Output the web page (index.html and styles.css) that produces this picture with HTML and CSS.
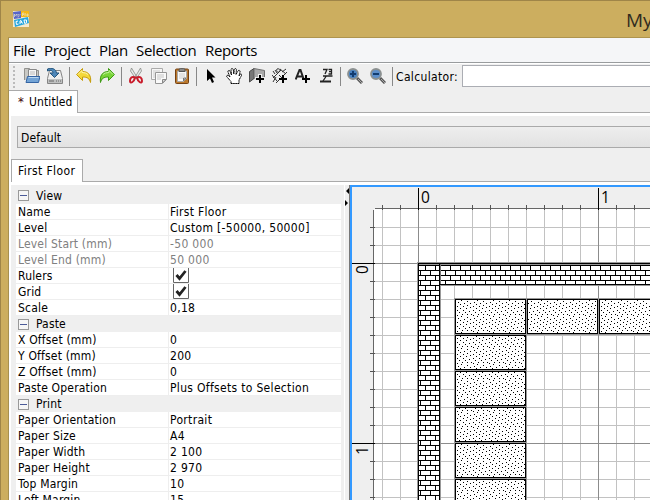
FILE: index.html
```html
<!DOCTYPE html>
<html lang="en">
<head>
<meta charset="utf-8">
<title>MyProCAD</title>
<link rel="stylesheet" href="styles.css">
</head>
<body>
<div class="window">
  <header class="titlebar">
    <svg class="logo" width="16" height="16" viewBox="0 0 16 16">
      <path fill="#f4ead0" d="M0 0h16v16H0z"/><path fill="#5865c9" d="M0 1l8-1v7l-7 1z"/><path fill="#f6b818" d="M8 0h8v6H8z"/><path fill="#29a8e0" d="M1 9l14-3 1 6-14 4z"/>
      <path d="M1.500 6V3l1 1.500L4 3v2.500M5 3l1 1.500L7.500 3M6 5l-1 1.500M9.500 5V2h1.500v1.500H9.500M12 5V3l1-.5M14 3h1v2h-1z" fill="none" stroke="#e7e5c6" stroke-width=".7"/>
      <path d="M5 10l-2 .5.5 3 2-.5M7 13V10l1-.5 1.500 3M7.500 11.500l1.500-.5M11 9l.7 3.500 1.800-.7V9z" fill="none" stroke="#fff"/>
    </svg>
    <span class="caption">My</span>
  </header>
  <div class="client">
    <nav class="menubar"><span class="m1">File</span><span class="m2">Project</span><span class="m3">Plan</span><span class="m4">Selection</span><span class="m5">Reports</span></nav>
    <div class="toolbar">
      <i class="grip"></i>
      <div class="group">
        <svg viewBox="0 0 16 16"><path d="M.5 12V.5h5l1 2h8V12" fill="#c9c9c5" stroke="#92928f"/><path d="M4.500 1.500h8V11h-8z" fill="#f5f5f5" stroke="#888"/><path d="M6 4h5M6 6h5" stroke="#bbb"/><path d="M3.500 8.500h12.500L14.500 14.500H2z" fill="#73a4d6" stroke="#3565a4"/><path d="M4.500 9.500h10" stroke="#b9d6ef"/></svg>
        <svg viewBox="0 0 16 16"><path d="M2.500 2.500h11l2 8v5H.5v-5z" fill="#eee" stroke="#858585"/><path d="M1 11h14v4H1z" fill="#bfc1c1"/><path d="M2 13h5M9 13h1M11 13h1M13 13h1" stroke="#666"/><path d="M.5 1C5-.8 9 1 9.500 5H12l-4.500 4.500L3 5h3C6 3 4 1.500.5 3z" fill="#4e87b9" stroke="#24557d"/></svg>
      </div><i class="sep"></i>
      <div class="group">
        <svg viewBox="0 0 16 16"><path d="M6.500.5v3c6 0 9 4 8 11-1-4-3-5.500-8-5.500v3.500L.6 6.600z" fill="#f4d83a" stroke="#c59c0c"/><path d="M2 6.500l4-4v2q4 0 6 2" stroke="#fff6aa" fill="none"/></svg>
        <svg viewBox="0 0 16 16"><path d="M9.500.5v3c-6 0-9 4-8 11 1-4 3-5.500 8-5.500v3.500l5.900-5.900z" fill="#79d438" stroke="#3c9a13"/><path d="M14 6.500l-4-4v2q-4 0-6 2" stroke="#c4f39d" fill="none"/></svg>
      </div><i class="sep"></i>
      <div class="group">
        <svg viewBox="0 0 16 16"><path d="M3.500 0l6 10-1.500 1L2.500 3zM12.500 0l-6 10 1.500 1 5.500-8z" fill="#e6e8e7" stroke="#888b88" stroke-width=".8"/><path d="M7 9.500c-3-1.500-5 .5-5 3.500 0 3 4 1.500 5-3.500zm2 0c3-1.500 5 .5 5 3.500 0 3-4 1.500-5-3.500z" fill="none" stroke="#c91c2b" stroke-width="2"/></svg>
        <svg viewBox="0 0 16 16"><path d="M.5.500h11v11H.5z" fill="#f6f6f6" stroke="#aaa"/><path d="M2 3h7M2 5h2M2 7h2M2 9h2" stroke="#ccc"/><path d="M4.500 4.500h11v7l-4 4h-7z" fill="#fafafa" stroke="#969696"/><path d="M6 7h7M6 9h7M6 11h4" stroke="#c5c5c5"/><path d="M11.500 15v-3.500H15z" fill="#ddd" stroke="#888"/></svg>
        <svg viewBox="0 0 16 16"><rect x="1.500" y="1" width="13" height="14.500" rx="1" fill="#bb792d" stroke="#744113"/><path d="M3.500 3h9v7.500l-3 3h-6z" fill="#fafafa" stroke="#aaa"/><path d="M5 1.500L6.500.2h3L11 1.500v2H5z" fill="#888" stroke="#555"/><path d="M5 6h6M5 8h6M5 10h4" stroke="#ccc"/><path d="M9.500 13v-3H12z" fill="#ddd" stroke="#777"/></svg>
      </div><i class="sep"></i>
      <div class="group">
        <svg viewBox="0 0 16 16"><path d="M4 1v12l3-2.500 2 4.500 2-1-2-4.500h3.500z" fill="#000"/></svg>
        <svg viewBox="0 0 16 16"><path d="M5 15.500v-2L1 9C-.3 7.500 1.700 6.600 3 8l1 1-2-5c-.4-1.700 1.500-2.200 2.200-.5L5.500 7 5 2c0-2 2-2 2.300-.2L7.800 6l.5-4.500c.3-1.500 2.200-1.200 2.100.3L10 6.500 12 3c.8-1.400 2.500-.5 2 1l-1 4 1-1.500c1-1.200 2-.3 1.500 1L13 12v3.500z" fill="#fff" stroke="#000" stroke-dasharray="1.500 .35"/></svg>
        <svg viewBox="0 0 16 16"><path d="M.5 3.500L5 .5v10L.5 14z" fill="#777" stroke="#484848"/><path d="M5 .5l10.500 2v10L5 10z" fill="#aaa" stroke="#717171"/><path d="M11 6v10M6 11h10" stroke="#eee" stroke-width="4"/><path d="M11 7v8M7 11h8" stroke="#000" stroke-width="2"/></svg>
        <svg viewBox="0 0 16 16"><path d="M1 10l8-8M4 15l11-11M0 7l5 6M8 1l6 5M1 3l2 3M3 2l2 3M5 1c3-1 4 2 2 3S4 2 5 1zM10 4l4-3M1 14l3-5M7 7l3 3" stroke="#333" fill="none"/><path d="M11 7v8M7 11h8" stroke="#000" stroke-width="2"/></svg>
        <svg viewBox="0 0 16 16"><path d="M.7 11.500L4.500 2h1l3.300 9.500M2 8.500h5" fill="none" stroke="#222" stroke-width="2"/><path d="M11 7v8M7 11h8" stroke="#000" stroke-width="2"/></svg>
        <svg viewBox="0 0 16 16"><path d="M5 1.500h4L7 6M10.500 1.500h3V6h-3M11 3.700h2.500M5 8h9.500M8 8.500L5 13" fill="none" stroke="#222" stroke-width="1.300"/><path d="M2 13.500h11" stroke="#222" stroke-width="2"/></svg>
      </div><i class="sep"></i>
      <div class="group">
        <svg viewBox="0 0 16 16"><path d="M10 10l5 5" stroke="#555" stroke-width="3"/><path d="M11 11l4 4" stroke="#aaa"/><circle cx="6" cy="6" r="5" fill="#4a83c1" stroke="#8b9090" stroke-width="1.800"/><path d="M6 3v6M3 6h6" stroke="#123c70" stroke-width="2"/></svg>
        <svg viewBox="0 0 16 16"><path d="M10 10l5 5" stroke="#555" stroke-width="3"/><path d="M11 11l4 4" stroke="#aaa"/><circle cx="6" cy="6" r="5" fill="#5d8fcb" stroke="#8b9090" stroke-width="1.800"/><path d="M3 6h6" stroke="#123c70" stroke-width="2"/></svg>
      </div><i class="sep"></i>
      <label class="calc">Calculator:</label><div class="field"></div>
    </div>
    <div class="tabs"><div class="tab doc"><b class="star">*</b><span>Untitled</span></div></div>
    <div class="page">
      <div class="combo"><span>Default</span></div>
      <div class="tabs floors"><div class="tab floor"><span>First Floor</span></div></div>
      <div class="split">
        <div class="props">
          <div class="head first"><i class="minus"></i>View</div>
          <div class="row"><span>Name</span><span>First Floor</span></div>
          <div class="row"><span>Level</span><span>Custom [-50000, 50000]</span></div>
          <div class="row off"><span>Level Start (mm)</span><span>-50 000</span></div>
          <div class="row off"><span>Level End (mm)</span><span>50 000</span></div>
          <div class="row"><span>Rulers</span><span><svg class="check" viewBox="0 0 16 15"><path d="M.5 0v14.500h15V0" fill="#fff" stroke="#666"/><path d="M3.500 7l3 3.500 6-7.500" fill="none" stroke="#222" stroke-width="2.800"/></svg></span></div>
          <div class="row"><span>Grid</span><span><svg class="check" viewBox="0 0 16 15"><path d="M.5 0v14.500h15V0" fill="#fff" stroke="#666"/><path d="M3.500 7l3 3.500 6-7.500" fill="none" stroke="#222" stroke-width="2.800"/></svg></span></div>
          <div class="row"><span>Scale</span><span>0,18</span></div>
          <div class="head"><i class="minus"></i>Paste</div>
          <div class="row"><span>X Offset (mm)</span><span>0</span></div>
          <div class="row"><span>Y Offset (mm)</span><span>200</span></div>
          <div class="row"><span>Z Offset (mm)</span><span>0</span></div>
          <div class="row"><span>Paste Operation</span><span>Plus Offsets to Selection</span></div>
          <div class="head"><i class="minus"></i>Print</div>
          <div class="row"><span>Paper Orientation</span><span>Portrait</span></div>
          <div class="row"><span>Paper Size</span><span>A4</span></div>
          <div class="row"><span>Paper Width</span><span>2 100</span></div>
          <div class="row"><span>Paper Height</span><span>2 970</span></div>
          <div class="row"><span>Top Margin</span><span>10</span></div>
          <div class="row"><span>Left Margin</span><span>15</span></div>
        </div>
        <div class="divider"><svg width="4" height="22" viewBox="0 0 4 22"><path d="M4 2v6L1 5zM0 14v6l3-3z"/></svg></div>
        <!-- Plan view: drawing units are window pixels -->
        <svg class="plan" width="301" height="315" viewBox="349 185 301 315" shape-rendering="crispEdges">
          <defs>
            <pattern id="grid" x="382" y="209" width="18" height="18" patternUnits="userSpaceOnUse"><path d="M0 0h1v18H0z" fill="#c2c2c2"/><path d="M0 0h18v1H0z" fill="#c2c2c2"/></pattern>
            <pattern id="ticksX" x="382" y="0" width="18" height="500" patternUnits="userSpaceOnUse"><path d="M0 205h1v5H0z" fill="#555"/></pattern>
            <pattern id="ticksY" x="0" y="209" width="500" height="18" patternUnits="userSpaceOnUse"><path d="M370 0h5v1h-5z" fill="#555"/></pattern>
            <pattern id="brickA" x="420" y="265" width="10" height="10" patternUnits="userSpaceOnUse"><path d="M0 0h10v1H0zM5 1h1v4H5zM0 5h10v1H0zM0 6h1v4H0z"/></pattern>
            <pattern id="brickB" x="440" y="265" width="10" height="10" patternUnits="userSpaceOnUse"><path d="M0 0h10v1H0zM0 1h1v4H0zM0 5h10v1H0zM5 6h1v4H5z"/></pattern>
            <pattern id="dots" x="456" y="300" width="16" height="16" patternUnits="userSpaceOnUse"><path d="M5 0h1v1H5zM11 1h1v1h-1zM2 2h1v1H2zM8 3h1v1H8zM14 3h1v1h-1zM4 4h1v1H4zM11 5h1v1h-1zM1 6h1v1H1zM7 6h1v1H7zM14 7h1v1h-1zM4 8h1v1H4zM10 8h1v1h-1zM1 10h1v1H1zM7 10h1v1H7zM13 11h1v1h-1zM3 12h1v1H3zM9 12h1v1H9zM6 14h1v1H6zM15 14h1v1h-1zM1 15h1v1H1zM11 14h1v1h-1z"/></pattern>
            <path id="cells" d="M455.500 299.500h70v34h-70zM527.500 299.500h70v34h-70zM599.500 299.500h70v34h-70zM455.500 335.500h70v34h-70zM455.500 371.500h70v34h-70zM455.500 407.500h70v34h-70zM455.500 443.500h70v34h-70zM455.500 479.500h70v34h-70z"/>
          </defs>
          <path fill="#efefef" d="M349 185h301v315H349z"/>
          <path fill="#fff" d="M374 209h276v291H374z"/>
          <path fill="url(#grid)" d="M374 210h276v290H374z"/>
          <path fill="#8c8c8c" d="M418 209h1v291h-1zM598 209h1v291h-1zM374 263h276v1H374zM374 443h276v1H374z"/>
          <path fill="#666" d="M375 208h275v1H375zM373 210h1v290h-1z"/>
          <path fill="url(#ticksX)" d="M376 205h274v5H376z"/><path fill="url(#ticksY)" d="M370 220h5v280h-5z"/>
          <path d="M418 188h1v22h-1zM598 188h1v22h-1zM352 263h23v1h-23zM352 443h23v1h-23z"/>
          <g class="wall">
            <path class="halo" d="M418.500 513.500v-250h251v21h-230v230z"/>
            <rect x="418.500" y="263.500" width="21" height="250" fill="#fff"/><rect x="418.500" y="263.500" width="21" height="250" fill="url(#brickA)"/>
            <rect x="439.500" y="263.500" width="230" height="21" fill="#fff"/><rect x="439.500" y="263.500" width="230" height="21" fill="url(#brickB)"/>
            <path fill="#999" d="M419 264h20v1h-20zM440 264h210v1H440z"/>
            <path fill="#777" d="M440 264h1v20h-1z"/>
          </g>
          <use href="#cells" class="halo"/><use href="#cells" fill="#fff"/><use href="#cells" fill="url(#dots)" stroke="#000"/>
          <path fill="#777" d="M349 185h1v315h-1z"/>
          <path fill="#3399ff" d="M350 185h300v2H352v313h-2z"/>
          <g class="nums"><text x="421" y="203">0</text><text x="601" y="203">1</text><text transform="translate(368 274) rotate(-90)">0</text><text transform="translate(368 455) rotate(-90)">1</text></g>
        </svg>
      </div>
    </div>
  </div>
</div>
</body>
</html>
```
FILE: styles.css
```css
* { box-sizing: border-box; }
body { margin: 0; width: 650px; height: 500px; overflow: hidden; font: 12px/16px "DejaVu Sans Condensed", "DejaVu Sans", sans-serif; font-stretch: condensed; color: #000; }
.window { height: 500px; background: #ccae5f; border-top: 1px solid #9f8548; border-left: 1px solid #9f8548; display: flex; flex-direction: column; }
.titlebar { height: 37px; flex: none; display: flex; border-bottom: 1px solid #ae944e; margin-left: 7px; padding: 10px 0 0 5px; overflow: hidden; }
.logo { flex: none; }
.caption { font: 19px/20px "Open Sans", sans-serif; color: #302b1e; margin: -1px 0 0 597px; }
.client { margin-left: 7px; border-left: 1px solid #a6904f; flex: 1; min-height: 0; background: #efefef; display: flex; flex-direction: column; }
.menubar { height: 25px; flex: none; background: #f5f6f8; border-bottom: 1px solid #999c9e; font: 15px/25px "Open Sans", sans-serif; padding-left: 4px; display: flex; white-space: nowrap; letter-spacing: -.35px; }
.menubar span { flex: none; }
.m1 { width: 31px; }
.m2 { width: 55px; }
.m3 { width: 37px; }
.m4 { width: 69px; }
.toolbar { height: 27px; flex: none; display: flex; align-items: flex-start; border-top: 1px solid #fff; padding: 1px 0 0 4px; }
.grip { width: 2px; height: 22px; margin: 1px 9px 0 0; background: repeating-linear-gradient(#bbb 0 2px, transparent 2px 4px); }
.group { display: flex; gap: 7px; margin-top: 3px; }
.group svg { width: 16px; height: 16px; }
.sep { width: 1px; height: 19px; background: #888; margin: 2px 6px 0; }
.calc { margin: 4px 0 0 -3px; width: 66px; white-space: nowrap; letter-spacing: .35px; }
.field { flex: 1; height: 22px; border: 1px solid #abadb3; border-right: 0; background: #fff; }
.tabs { display: flex; height: 26px; border-bottom: 3px solid #fff; box-shadow: inset 0 -1px #aaa; flex: none; }
.tab { background: #fff; border: 1px solid #aaa; border-bottom: 0; border-left: 0; white-space: nowrap; height: 24px; display: flex; align-items: center; }
.doc { width: 69px; height: 23px; padding-left: 9px; letter-spacing: .1px; }
.star { font-weight: normal; width: 11px; font-size: 13px; color: #400000; }
.page { flex: 1; min-height: 0; border-left: 2px solid #fff; display: flex; flex-direction: column; }
.combo { height: 22px; border: 1px solid #aaa; border-right: 0; background: linear-gradient(#eee, #e2e2e2); margin: 10px 0 0 6px; padding: 3px 0 0 3px; flex: none; letter-spacing: .1px; }
.floors { margin-top: 11px; }
.floor { width: 72px; border-left: 1px solid #aaa; padding-left: 6px; height: 23px; letter-spacing: .4px; }
.split { display: flex; flex: 1; min-height: 0; }
.props { width: 330px; padding: 2px 0 0 5px; flex: none; overflow: hidden; }
.head { height: 16px; display: flex; align-items: center; padding-left: 2px; letter-spacing: .15px; }
.first { height: 17px; }
.minus { width: 11px; height: 11px; margin-right: 7px; background: linear-gradient(#4b5a98, #4b5a98) center / 7px 1px no-repeat, #f6f6f6; border: 1px solid #999; }
.row { display: grid; grid-template-columns: 152px 1fr; height: 16px; background: #fff; border-bottom: 1px solid #eee; line-height: 16px; white-space: nowrap; letter-spacing: .18px; }
.row span { padding-left: 2px; height: 15px; }
.row span + span { border-left: 1px solid #eee; padding-left: 1px; letter-spacing: .32px; }
.off { color: #808080; }
.check { width: 16px; height: 15px; margin-left: 3px; display: block; }
.divider { width: 8px; padding: 1px 0 0 4px; flex: none; background: linear-gradient(#fff, #fff) 3px 0 / 1px 100% no-repeat; }
.divider svg { display: block; }
.plan { flex: none; display: block; }
.wall rect { stroke: #000; }
.halo { fill: none; stroke: #999; stroke-width: 3px; }
.nums { font: 15.5px "Open Sans", sans-serif; }
```
